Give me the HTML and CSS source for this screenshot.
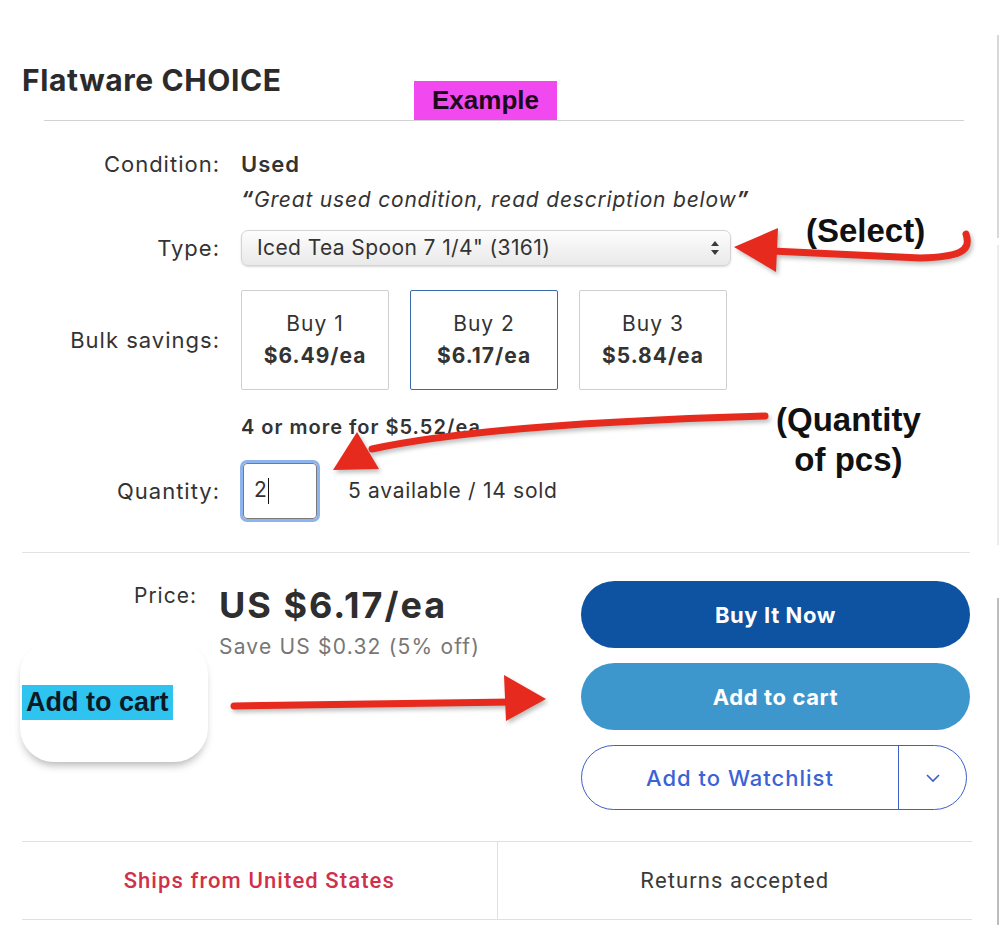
FILE: index.html
```html
<!DOCTYPE html>
<html lang="en">

<head>
    <meta charset="UTF-8">
    <meta name="viewport" content="width=device-width, initial-scale=1.0">
    <title>Flatware CHOICE</title>
    <link rel="stylesheet" href="styles.css">
</head>

<body>
    <div class="page">
        <header class="item-head">
            <h1>Flatware CHOICE</h1>
        </header>
        <div class="head-rule"></div>

        <div class="details">
            <div class="row row-condition">
                <span class="label">Condition:</span>
                <strong class="value">Used</strong>
            </div>
            <div class="row row-quote">
                <span class="label"></span>
                <p class="quote"><b>“</b>Great used condition, read description below<b>”</b></p>
            </div>
            <div class="row row-type">
                <span class="label">Type:</span>
                <div class="select">
                    <span>Iced Tea Spoon 7 1/4" (3161)</span>
                    <svg class="select-arrows" width="10" height="16" viewBox="0 0 10 16">
                        <path d="M5 1 L9 6 H1 Z" fill="#3a3a3a" />
                        <path d="M5 15 L9 10 H1 Z" fill="#3a3a3a" />
                    </svg>
                </div>
            </div>
            <div class="row row-bulk">
                <span class="label">Bulk savings:</span>
                <div class="bulk-options">
                    <div class="bulk-box">
                        <span>Buy 1</span>
                        <strong>$6.49/ea</strong>
                    </div>
                    <div class="bulk-box selected">
                        <span>Buy 2</span>
                        <strong>$6.17/ea</strong>
                    </div>
                    <div class="bulk-box">
                        <span>Buy 3</span>
                        <strong>$5.84/ea</strong>
                    </div>
                </div>
            </div>
            <div class="row row-more">
                <span class="label"></span>
                <strong class="more">4 or more for $5.52/ea</strong>
            </div>
            <div class="row row-qty">
                <span class="label">Quantity:</span>
                <div class="qty-input"><span class="qty-value">2</span></div>
                <span class="stock">5 available / 14 sold</span>
            </div>
        </div>

        <div class="buy-section">
            <div class="price-block">
                <span class="price-label">Price:</span>
                <div class="price-values">
                    <div class="price">US $6.17/ea</div>
                    <div class="savings">Save US $0.32 (5% off)</div>
                </div>
            </div>
            <div class="actions">
                <button class="btn btn-primary">Buy It Now</button>
                <button class="btn btn-secondary">Add to cart</button>
                <div class="btn btn-watch">
                    <span class="watch-label">Add to Watchlist</span>
                    <span class="watch-more">
                        <svg width="16" height="10" viewBox="0 0 16 10">
                            <path d="M2 2 L8 8 L14 2" fill="none" stroke="#3b5fc9" stroke-width="1.6" />
                        </svg>
                    </span>
                </div>
            </div>
        </div>

        <div class="ship-info">
            <div class="ship-cell ship-from">Ships from United States</div>
            <div class="ship-cell">Returns accepted</div>
        </div>

        <!-- annotations drawn over the screenshot -->
        <div class="tag-example">Example</div>
        <div class="note note-select">(Select)</div>
        <div class="note note-qty">(Quantity<br>of pcs)</div>
        <div class="cart-callout"><span>Add to cart</span></div>
        <div class="edge edge-top"></div>
        <div class="edge edge-mid"></div>
        <div class="edge edge-low"></div>

        <svg class="arrows" width="1000" height="925" viewBox="0 0 1000 925">
            <g fill="#e62a1e" stroke="#e62a1e">
                <path d="M966 234 C 972 252, 958 257, 920 258 L 772 251" fill="none" stroke-width="7" stroke-linecap="round" />
                <polygon points="734,247 778,228 776,272" stroke="none" />

                <path d="M765 416 C 620 420, 470 428, 372 449" fill="none" stroke-width="7" stroke-linecap="round" />
                <polygon points="333,470 357,432 379,469" stroke="none" />

                <path d="M234 706 L 512 702" fill="none" stroke-width="7" stroke-linecap="round" />
                <polygon points="546,699 504,675 506,721" stroke="none" />
            </g>
        </svg>
    </div>
</body>

</html>
```

FILE: styles.css
```css
body {
    margin: 0;
    font-family: Inter, "Open Sans", sans-serif;
    color: #333;
    background: #fff;
}

.page {
    position: relative;
    width: 1000px;
    height: 925px;
    overflow: hidden;
}

.item-head {
    height: 120px;
    box-sizing: border-box;
    padding: 62px 0 0 22px;
}

.item-head h1 {
    margin: 0;
    font-size: 30px;
    line-height: 36px;
    font-weight: 700;
    color: #2b2b2b;
    letter-spacing: 0.6px;
}

.head-rule {
    margin-left: 44px;
    width: 920px;
    border-top: 1px solid #d2d2d2;
}

.details {
    padding-top: 31px;
}

.row {
    display: flex;
    align-items: center;
    gap: 21px;
    font-size: 21px;
    line-height: 24px;
}

.label {
    flex: 0 0 220px;
    text-align: right;
    color: #333;
    font-size: 22px;
    letter-spacing: 1px;
}

.value {
    font-weight: 600;
    font-size: 22px;
    letter-spacing: 1px;
}

.row-quote {
    margin-top: 12px;
}

.quote {
    margin: 0;
    font-style: italic;
    font-size: 21px;
    letter-spacing: 0.8px;
    color: #333;
}

.row-type {
    margin-top: 18px;
}

.select {
    width: 490px;
    height: 36px;
    box-sizing: border-box;
    display: flex;
    align-items: center;
    justify-content: space-between;
    padding: 0 10px 0 15px;
    border: 1px solid #d4d4d4;
    border-radius: 7px;
    background: linear-gradient(#fdfdfd, #e9e9e9);
    box-shadow: 0 1px 2px rgba(0, 0, 0, 0.15);
    font-size: 21px;
    letter-spacing: 0.4px;
    color: #333;
}

.row-bulk {
    margin-top: 24px;
}

.bulk-options {
    display: flex;
    gap: 21px;
}

.bulk-box {
    width: 148px;
    height: 100px;
    box-sizing: border-box;
    border: 1px solid #cfcfcf;
    border-radius: 2px;
    display: flex;
    flex-direction: column;
    align-items: center;
    justify-content: center;
    gap: 8px;
    font-size: 21px;
    line-height: 24px;
    letter-spacing: 1px;
}

.bulk-box.selected {
    border: 1.5px solid #3b6aa8;
}

.row-more {
    margin-top: 25px;
}

.more {
    font-size: 20px;
    font-weight: 600;
    letter-spacing: 1px;
}

.row-qty {
    margin-top: 21px;
}

.qty-input {
    width: 74px;
    height: 56px;
    margin: 3px 0 3px 2px;
    box-sizing: border-box;
    border: 1px solid #7a7a7a;
    border-radius: 4px;
    box-shadow: 0 0 0 3px #8db4ec;
    display: flex;
    align-items: center;
    padding-left: 10px;
    font-size: 21px;
}

.qty-value::after {
    content: "";
    display: inline-block;
    width: 1px;
    height: 26px;
    margin-left: 1px;
    vertical-align: middle;
    background: #111;
}

.stock {
    margin-left: 10px;
    font-size: 21px;
    letter-spacing: 0.7px;
}

.buy-section {
    margin: 30px 30px 0 22px;
    border-top: 1px solid #e2e2e2;
    padding-top: 28px;
    display: flex;
    justify-content: space-between;
}

.price-block {
    display: flex;
    gap: 22px;
    padding-top: 3px;
}

.price-label {
    flex: 0 0 175px;
    text-align: right;
    font-size: 21px;
    letter-spacing: 1px;
    line-height: 24px;
}

.price {
    font-size: 36px;
    line-height: 40px;
    font-weight: 700;
    color: #2e2e2e;
    letter-spacing: 2px;
    margin-top: 1px;
}

.savings {
    margin-top: 9px;
    font-size: 21px;
    letter-spacing: 1.2px;
    color: #777;
}

.actions {
    width: 389px;
    display: flex;
    flex-direction: column;
    gap: 15px;
}

.btn {
    height: 67px;
    border: none;
    border-radius: 34px;
    font-family: inherit;
    font-size: 22px;
    font-weight: 700;
    color: #fff;
    letter-spacing: 0.6px;
}

.btn-primary {
    background: #0d53a1;
}

.btn-secondary {
    background: #3d97cc;
}

.btn-watch {
    height: 65px;
    width: 386px;
    box-sizing: border-box;
    border: 1.5px solid #3d5fc8;
    display: flex;
    color: #3b63d6;
    font-weight: 500;
    letter-spacing: 1px;
}

.watch-label {
    flex: 1;
    display: flex;
    align-items: center;
    justify-content: center;
    border-right: 1.5px solid #3d5fc8;
}

.watch-more {
    width: 67px;
    display: flex;
    align-items: center;
    justify-content: center;
}

.ship-info {
    margin: 31px 0 0 22px;
    width: 950px;
    height: 79px;
    box-sizing: border-box;
    border-top: 1px solid #e0e0e0;
    border-bottom: 1px solid #e0e0e0;
    display: flex;
    font-family: Roboto, sans-serif;
    font-size: 22px;
    letter-spacing: 1.1px;
}

.ship-cell {
    flex: 1;
    display: flex;
    align-items: center;
    justify-content: center;
    color: #3a3a3a;
}

.ship-from {
    border-right: 1px solid #e0e0e0;
    color: #d0314a;
    font-weight: 500;
}

/* annotations */
.tag-example {
    position: absolute;
    left: 414px;
    top: 81px;
    width: 143px;
    height: 39px;
    background: #f248f0;
    font-family: "Liberation Sans", Arial, sans-serif;
    font-weight: 700;
    font-size: 26px;
    line-height: 39px;
    text-align: center;
    color: #1d0a1d;
}

.note {
    position: absolute;
    font-family: "Liberation Sans", Arial, sans-serif;
    font-weight: 700;
    font-size: 33px;
    line-height: 40px;
    color: #111;
    text-align: center;
}

.note-select {
    left: 806px;
    top: 211px;
}

.note-qty {
    left: 776px;
    top: 400px;
}

.cart-callout {
    position: absolute;
    left: 20px;
    top: 640px;
    width: 188px;
    height: 122px;
    border-radius: 34px;
    background: #fff;
    box-shadow: 0 6px 8px -3px rgba(0, 0, 0, 0.3);
}

.cart-callout span {
    position: absolute;
    left: 2px;
    top: 45px;
    padding: 0 4px;
    height: 35px;
    background: #2fc3ef;
    font-family: "Liberation Sans", Arial, sans-serif;
    font-weight: 700;
    font-size: 27px;
    line-height: 35px;
    color: #0c1a26;
}

.edge {
    position: absolute;
    left: 997px;
    width: 2px;
    background: #d8d8d8;
}

.edge-top {
    top: 35px;
    height: 203px;
}

.edge-mid {
    top: 245px;
    height: 300px;
    background: #ececec;
}

.edge-low {
    top: 598px;
    height: 327px;
    background: #bdbdbd;
}

.arrows {
    position: absolute;
    left: 0;
    top: 0;
    pointer-events: none;
    filter: drop-shadow(2px 3px 2px rgba(0, 0, 0, 0.25));
}
```
